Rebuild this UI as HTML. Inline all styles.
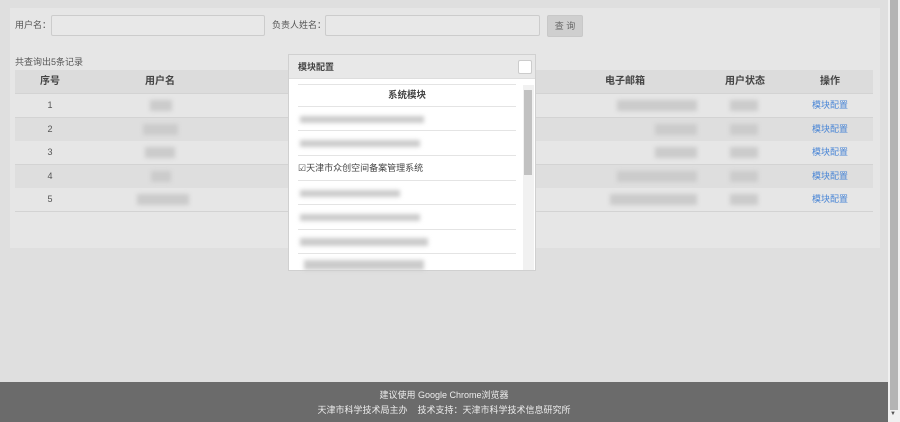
<!DOCTYPE html>
<html><head><meta charset="utf-8"><style>
*{margin:0;padding:0;box-sizing:border-box}
body{width:900px;height:422px;overflow:hidden;background:#dfdfdf;font-family:"Liberation Sans","Noto Sans CJK SC",sans-serif;font-size:9px;color:#555;position:relative}
.abs{position:absolute}
.panel{left:10px;top:8px;width:870px;height:240px;background:#e6e6e6}
.inp{height:21px;border:1px solid #ccc;border-radius:2px;background:#e8e8e8}
.btn{background:#cfcfcf;border:1px solid #c8c8c8;border-radius:2px;color:#666;text-align:center;line-height:21px}
.row{left:15px;width:858px;height:23.5px;border-bottom:1px solid #d3d3d3}
.c{position:absolute;text-align:center;line-height:23px}
.blur{position:absolute;background:#cbcbcb;filter:blur(2px)}
.link{color:#4a86d6}
.modal{left:288px;top:54px;width:248px;height:217px;background:#fff;border:1px solid #d0d0d0}
.mi{position:absolute;left:9px;width:218px;border-bottom:1px solid #e4e4e4}
.footer{left:0;top:382px;width:888px;height:40px;background:#6b6b6b;color:#eee;text-align:center;font-size:9px;line-height:13px}
</style></head><body>
<div class="abs panel"></div>
<div class="abs" style="left:15px;top:19px;line-height:12px">用户名：</div>
<div class="abs inp" style="left:51px;top:15px;width:214px"></div>
<div class="abs" style="left:272px;top:19px;line-height:12px">负责人姓名：</div>
<div class="abs inp" style="left:325px;top:15px;width:215px"></div>
<div class="abs btn" style="left:547px;top:15px;width:36px;height:22px">查 询</div>
<div class="abs" style="left:15px;top:55px">共查询出5条记录</div>

<div class="abs row" style="top:70px;background:#dcdcdc;font-weight:600;color:#444;font-size:10px">
<div class="c" style="left:0;width:70px">序号</div><div class="c" style="left:110px;width:70px">用户名</div>
<div class="c" style="left:575px;width:70px">电子邮箱</div><div class="c" style="left:695px;width:70px">用户状态</div><div class="c" style="left:790px;width:50px">操作</div></div>
<div class="abs row" style="top:94px;background:#e6e6e6"><div class="c" style="left:0;width:70px">1</div><div class="blur" style="left:135px;top:6px;width:22px;height:11px"></div><div class="blur" style="left:602px;top:6px;width:80px;height:11px"></div><div class="blur" style="left:715px;top:6px;width:28px;height:11px"></div><div class="c link" style="left:790px;width:50px">模块配置</div></div>
<div class="abs row" style="top:118px;background:#dedede"><div class="c" style="left:0;width:70px">2</div><div class="blur" style="left:128px;top:6px;width:35px;height:11px"></div><div class="blur" style="left:640px;top:6px;width:42px;height:11px"></div><div class="blur" style="left:715px;top:6px;width:28px;height:11px"></div><div class="c link" style="left:790px;width:50px">模块配置</div></div>
<div class="abs row" style="top:141px;background:#e6e6e6"><div class="c" style="left:0;width:70px">3</div><div class="blur" style="left:130px;top:6px;width:30px;height:11px"></div><div class="blur" style="left:640px;top:6px;width:42px;height:11px"></div><div class="blur" style="left:715px;top:6px;width:28px;height:11px"></div><div class="c link" style="left:790px;width:50px">模块配置</div></div>
<div class="abs row" style="top:165px;background:#dedede"><div class="c" style="left:0;width:70px">4</div><div class="blur" style="left:136px;top:6px;width:20px;height:11px"></div><div class="blur" style="left:602px;top:6px;width:80px;height:11px"></div><div class="blur" style="left:715px;top:6px;width:28px;height:11px"></div><div class="c link" style="left:790px;width:50px">模块配置</div></div>
<div class="abs row" style="top:188px;background:#e6e6e6"><div class="c" style="left:0;width:70px">5</div><div class="blur" style="left:122px;top:6px;width:52px;height:11px"></div><div class="blur" style="left:595px;top:6px;width:87px;height:11px"></div><div class="blur" style="left:715px;top:6px;width:28px;height:11px"></div><div class="c link" style="left:790px;width:50px">模块配置</div></div>

<div class="abs modal">
 <div style="position:absolute;left:0;top:0;width:246px;height:24px;background:#e8e8e8;border-bottom:1px solid #ddd;font-weight:bold;color:#444;line-height:24px;padding-left:9px;font-size:9px">模块配置</div>
 <div style="position:absolute;left:229px;top:5px;width:14px;height:14px;background:#fff;border:1px solid #ccc;border-radius:2px"></div>
 <div style="position:absolute;left:234px;top:30px;width:11px;height:185px;background:#f1f1f1"></div>
 <div style="position:absolute;left:235px;top:35px;width:8px;height:85px;background:#c1c1c1"></div>
 <div class="mi" style="top:26px;height:4px"></div>
 <div class="mi" style="top:30px;height:22px;text-align:center;line-height:22px;font-weight:bold;color:#444;font-size:9.5px">系统模块</div>
 <div class="mi" style="top:52px;height:24px"><div class="blur" style="left:2px;top:9px;width:124px;height:7px"></div></div>
 <div class="mi" style="top:76px;height:25px"><div class="blur" style="left:2px;top:9px;width:120px;height:7px"></div></div>
 <div class="mi" style="top:101px;height:25px;line-height:25px;color:#444;font-size:9px">☑天津市众创空间备案管理系统</div>
 <div class="mi" style="top:126px;height:24px"><div class="blur" style="left:2px;top:9px;width:100px;height:7px"></div></div>
 <div class="mi" style="top:150px;height:25px"><div class="blur" style="left:2px;top:9px;width:120px;height:7px"></div></div>
 <div class="mi" style="top:175px;height:24px"><div class="blur" style="left:2px;top:8px;width:128px;height:8px"></div></div>
 <div class="mi" style="top:199px;height:16px;border:none"><div class="blur" style="left:6px;top:6px;width:120px;height:10px"></div></div>
</div>

<div class="abs footer"><div style="margin-top:7px">建议使用 Google Chrome浏览器</div><div style="margin-top:2px">天津市科学技术局主办&nbsp;&nbsp;&nbsp;&nbsp;技术支持：天津市科学技术信息研究所</div></div>
<div class="abs" style="left:888px;top:0;width:12px;height:422px;background:#f0f0f0"></div>
<div class="abs" style="left:890px;top:0;width:8px;height:410px;background:#b4b4b4"></div>
<div class="abs" style="left:890px;top:411px;font-size:6px;color:#555">▼</div>
</body></html>
